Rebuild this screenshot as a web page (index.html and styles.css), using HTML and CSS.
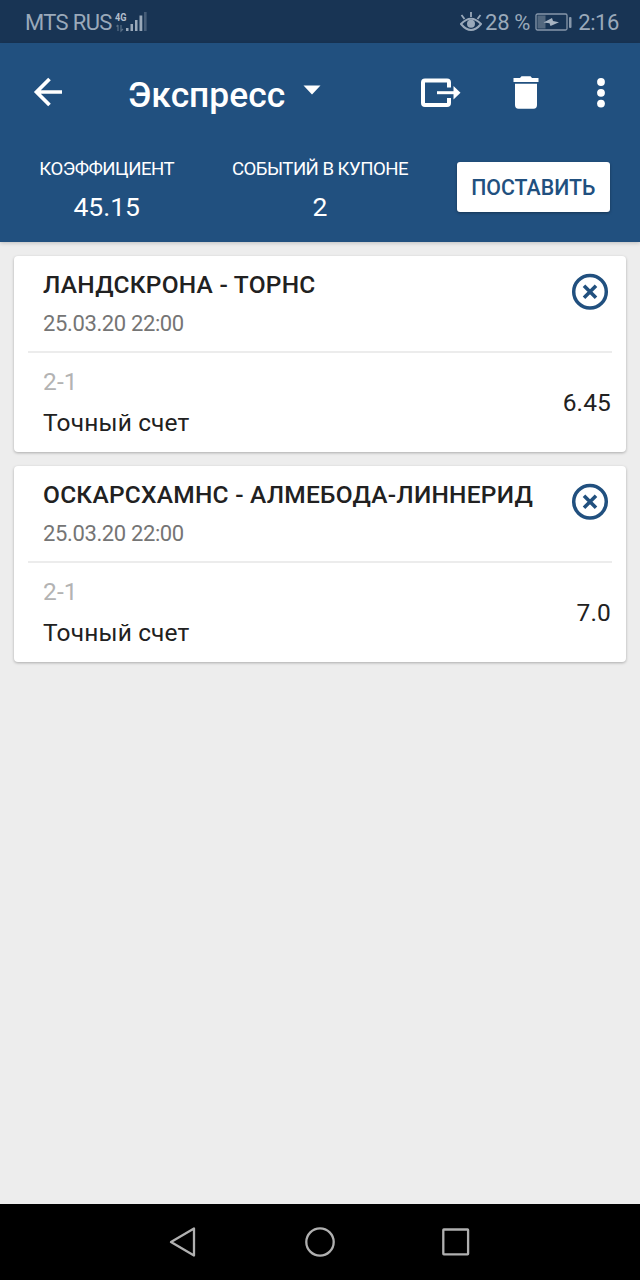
FILE: index.html
```html
<!DOCTYPE html>
<html lang="ru">
<head>
<meta charset="utf-8">
<title>Экспресс</title>
<link rel="stylesheet" href="styles.css">
</head>
<body>
<div class="screen">
  <div class="status">
    <span class="carrier">MTS RUS</span>
    <svg class="signal" width="34" height="22" viewBox="0 0 34 22">
      <text class="net" x="1" y="9.500" textLength="11.500" lengthAdjust="spacingAndGlyphs">4G</text>
      <g fill="#9aa9ba">
        <rect x="12" y="17" width="2.500" height="3"/><rect x="16.500" y="13" width="2.500" height="7"/><rect x="21" y="9" width="2.500" height="11"/><rect x="25.500" y="4.500" width="2.800" height="15.500"/>
        <rect x="30" y="1" width="2.600" height="19" opacity=".35"/>
        <path d="M4 14v6M2.500 15.500L4 14M7 14v6l2-2" fill="none" stroke="#9aa9ba" stroke-width="1.200" opacity=".5"/>
      </g>
    </svg>
    <span class="grow"></span>
    <svg class="eye" width="22" height="20" viewBox="0 0 22 20">
      <path d="M1 12Q11 1.500 21 12Q11 24 1 12Z" fill="none" stroke="#9aa9ba" stroke-width="2"/>
      <circle cx="11" cy="11.700" r="4" fill="#9aa9ba"/>
      <path d="M11 0v5M1.500 3l3 4M20.500 3l-3 4" stroke="#9aa9ba" stroke-width="1.800"/>
    </svg>
    <span class="percent">28 %</span>
    <svg class="battery" width="37" height="18" viewBox="0 0 37 18">
      <rect x="1" y="1" width="31" height="16" rx="1.500" fill="none" stroke="#8797aa" stroke-width="1.300"/>
      <rect x="2.500" y="2.500" width="8" height="13" fill="#53687f"/>
      <path d="M8.500 9.500L17 5L18 8L24 9.300L15.500 13L14.500 10.300Z" fill="#a8b4c2"/>
      <rect x="34" y="4" width="2.500" height="11" rx="1" fill="#8797aa"/>
    </svg>
    <span class="clock">2:16</span>
  </div>
  <header class="header">
    <div class="toolbar">
      <svg class="back" width="30" height="30" viewBox="0 0 30 30"><path d="M29 15H4M16.500 2L3.500 15L16.500 28" fill="none" stroke="#fff" stroke-width="3.700"/></svg>
      <h1 class="title">Экспресс</h1>
      <svg class="caret" width="18" height="10" viewBox="0 0 18 10"><path d="M0.500 0.500H17.500L9 9.500Z" fill="#fff"/></svg>
      <span class="grow"></span>
      <svg class="export" width="40" height="30" viewBox="0 0 40 30">
        <path d="M28 9.500V4.500Q28 2.500 26 2.500H4Q2 2.500 2 4.500V25Q2 27 4 27H26Q28 27 28 25V20" fill="none" stroke="#fff" stroke-width="4"/>
        <path d="M16 14.700H34" stroke="#fff" stroke-width="3"/><path d="M32.500 8L39.500 14.700L32.500 21.500Z" fill="#fff"/>
      </svg>
      <svg class="trash" width="26" height="33" viewBox="0 0 26 33"><path d="M.5 2H7L8.500 .3H17.500L19 2H25.500V6H.5ZM2 7.800H24V29Q24 32.700 20.500 32.700H5.500Q2 32.700 2 29Z" fill="#fff"/></svg>
      <svg class="more" width="8" height="30" viewBox="0 0 8 30"><g fill="#fff"><circle cx="4" cy="4" r="3.900"/><circle cx="4" cy="14.800" r="3.900"/><circle cx="4" cy="25.600" r="3.900"/></g></svg>
    </div>
    <div class="summary">
      <div class="stat"><div class="label">КОЭФФИЦИЕНТ</div><div class="value">45.15</div></div>
      <div class="stat"><div class="label">СОБЫТИЙ В КУПОНЕ</div><div class="value">2</div></div>
      <div class="action"><button class="place">ПОСТАВИТЬ</button></div>
    </div>
  </header>
  <main class="list">
    <article class="card">
      <div class="event">
        <div><h2 class="teams">ЛАНДСКРОНА - ТОРНС</h2><div class="date">25.03.20 22:00</div></div>
        <svg class="remove" width="38" height="38" viewBox="0 0 38 38"><circle cx="19" cy="18.700" r="16.300"/><path d="M13 12.700L25 24.700M25 12.700L13 24.700"/></svg>
      </div>
      <div class="bet">
        <div><div class="pick">2-1</div><div class="market">Точный счет</div></div>
        <div class="odds">6.45</div>
      </div>
    </article>
    <article class="card">
      <div class="event">
        <div><h2 class="teams">ОСКАРСХАМНС - АЛМЕБОДА-ЛИННЕРИД</h2><div class="date">25.03.20 22:00</div></div>
        <svg class="remove" width="38" height="38" viewBox="0 0 38 38"><circle cx="19" cy="18.700" r="16.300"/><path d="M13 12.700L25 24.700M25 12.700L13 24.700"/></svg>
      </div>
      <div class="bet">
        <div><div class="pick">2-1</div><div class="market">Точный счет</div></div>
        <div class="odds">7.0</div>
      </div>
    </article>
  </main>
  <nav class="nav">
    <svg width="28" height="32" viewBox="0 0 28 32"><path d="M25 2.500V29.500L2 16Z"/></svg>
    <svg width="32" height="32" viewBox="0 0 32 32"><circle cx="16" cy="16" r="13.700"/></svg>
    <svg width="28" height="28" viewBox="0 0 28 28"><rect x="1.300" y="1.500" width="24.800" height="24.800" rx=".5"/></svg>
  </nav>
</div>
</body>
</html>
```
FILE: styles.css
```css
* { box-sizing: border-box; }
body { margin: 0; font-family: Roboto, sans-serif; background: #ededed; }
h1, h2 { margin: 0; }
svg { display: block; flex: none; }
.screen { width: 640px; height: 1280px; display: flex; flex-direction: column; }
.grow { flex: 1; }

.status { height: 43px; padding: 1px 21px 0 25px; display: flex; align-items: center; background: #183454; color: #9aa9ba; font-size: 22px; line-height: 40px; white-space: nowrap; }
.carrier, .percent, .clock { padding-top: 2px; }
.carrier { letter-spacing: -.65px; }
.signal { margin-left: 2px; }
.net { font: 700 11.5px Roboto, sans-serif; letter-spacing: 0; fill: #b3bfcc; }
.percent { margin-left: 3px; letter-spacing: -.3px; }
.battery { margin-left: 5px; }
.clock { margin-left: 6px; letter-spacing: -.4px; }

.header { height: 199px; background: #21507f; color: #fff; box-shadow: 0 1px 4px rgba(0, 0, 0, .2); }
.toolbar { height: 99px; padding: 0 35px 0 33px; display: flex; align-items: center; }
.back { margin-bottom: 2px; }
.title { margin: 5px 0 0 65px; font-size: 35.4px; font-weight: 500; line-height: 42px; }
.caret { margin: 0 0 6px 18px; }
.export { margin-right: 52px; }
.trash { margin-right: 58px; }
.summary { display: grid; grid-template-columns: repeat(3, 1fr); }
.stat { padding-top: 16px; text-align: center; white-space: nowrap; }
.label { font-size: 18.6px; line-height: 22px; letter-spacing: -.52px; }
.value { margin-top: 11px; font-size: 26.5px; line-height: 32px; }
.action { display: flex; justify-content: center; padding-top: 20px; }
.place { width: 153px; height: 50px; padding: 2px 0 0; border: 0; border-radius: 3px; background: #fff; color: #21507f; font: 500 21.3px/24px Roboto, sans-serif; box-shadow: 0 1px 3px rgba(0, 0, 0, .35); }

.list { flex: 1; padding: 14px; display: flex; flex-direction: column; gap: 14px; }
.card { height: 196px; padding: 0 14px; border-radius: 4px; background: #fff; box-shadow: 0 1px 3px rgba(0, 0, 0, .28); color: #212121; }
.event { height: 97px; padding: 14px 3px 0 15px; display: flex; justify-content: space-between; border-bottom: 2px solid #ececec; }
.teams { font-size: 24.5px; font-weight: 500; line-height: 30px; letter-spacing: .25px; white-space: nowrap; }
.date { margin-top: 11px; font-size: 22px; line-height: 26px; letter-spacing: -.37px; color: #757575; }
.remove { margin-top: 3px; fill: none; stroke: #21507f; stroke-width: 3.5; }
.remove path { stroke-width: 3.6; }
.bet { height: 99px; padding: 14px 1px 0 15px; display: flex; justify-content: space-between; font-size: 24.5px; line-height: 30px; letter-spacing: .15px; }
.pick { color: #b3b3b3; }
.market { margin-top: 11px; }
.odds { margin-top: 21px; }

.nav { height: 76px; padding: 0 170px 0 169px; display: flex; align-items: center; justify-content: space-between; background: #000; }
.nav svg { fill: none; stroke: #b0b0b0; stroke-width: 2.3; stroke-linejoin: round; }
```
